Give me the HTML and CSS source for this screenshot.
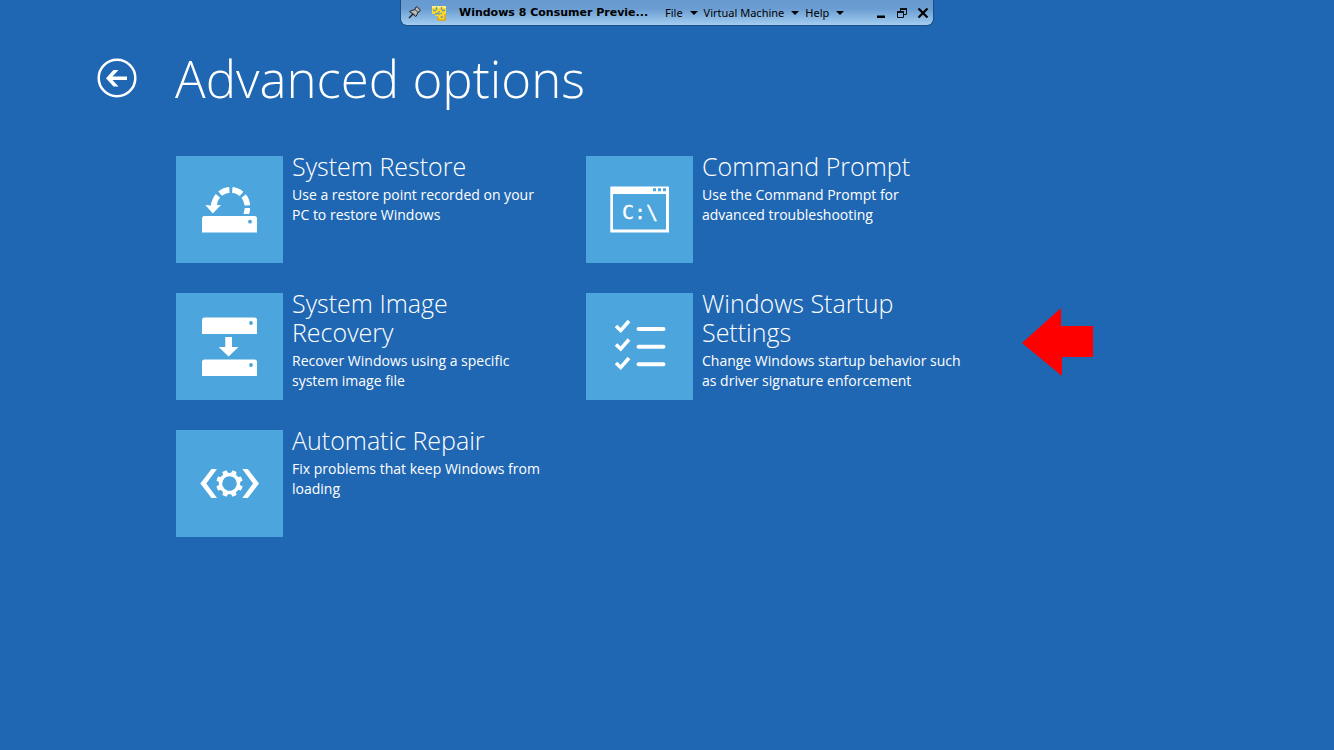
FILE: index.html
```html
<!DOCTYPE html>
<html lang="en">

<head>
    <meta charset="UTF-8">
    <meta name="viewport" content="width=device-width, initial-scale=1">
    <title>Advanced options</title>
    <link rel="stylesheet" href="styles.css">
</head>

<body>
    <!-- Virtual machine connection bar -->
    <nav class="vm-bar">
        <button class="vm-pin" type="button" aria-label="Pin">
            <svg width="13" height="13" viewBox="0 0 13 13">
                <path d="M1 12L5 8" stroke="#222" stroke-width="1.4"/>
                <path d="M1.500 5.500L4 4.500L7 3.500L7.500 1.500L9 .7L12.300 4L11.500 5.500L10 6L9 8.500L8 10.500Z" fill="#bbb" stroke="#222"/>
                <path d="M7 3.500L9.700 6M4 6.500L6.500 9" stroke="#333"/>
            </svg>
        </button>
        <svg class="vm-logo" width="16" height="16" viewBox="0 0 16 16">
            <path d="M1 1H15V10H14V15H7V11H4V9H1Z" fill="#f8d92f"/>
            <path d="M1 1H15V3H1Z" fill="#fdf07a"/>
            <path d="M14 9V15H7V12" fill="none" stroke="#e8a800" stroke-width="1.500"/>
            <path d="M5.500 2V5M10.500 2V5M2 5.500H5M11 5.500H14M5 10V8.500H7M8 6V10M11 8.500H9.500M9.500 12H12" stroke="#7295a8" stroke-width="1.300" fill="none"/>
        </svg>
        <strong class="vm-title">Windows 8 Consumer Previe...</strong>
        <button class="vm-menu" type="button">File</button>
        <button class="vm-menu" type="button">Virtual Machine</button>
        <button class="vm-menu" type="button">Help</button>
        <div class="vm-controls">
            <button type="button" aria-label="Minimize">
                <svg width="12" height="12" viewBox="0 0 12 12"><path d="M2 8.500H10V11H2Z" fill="#000"/></svg>
            </button>
            <button type="button" aria-label="Restore">
                <svg width="12" height="12" viewBox="0 0 12 12" fill="none" stroke="#111">
                    <path d="M4.500 4V1.500H10.500V7.500H8"/>
                    <path d="M4 2H11" stroke-width="2"/>
                    <path d="M1.500 4.500H7.500V10.500H1.500Z"/>
                    <path d="M1 5H8" stroke-width="2"/>
                </svg>
            </button>
            <button type="button" aria-label="Close">
                <svg width="12" height="12" viewBox="0 0 12 12"><path d="M1.500 1.500L10.500 10.500M10.500 1.500L1.500 10.500" stroke="#000" stroke-width="2.200"/></svg>
            </button>
        </div>
    </nav>

    <header class="page-header">
        <button class="back" type="button" aria-label="Back">
            <svg width="40" height="40" viewBox="0 0 40 40">
                <circle cx="20" cy="20" r="18.300" fill="none" stroke="#fff" stroke-width="2.500"/>
                <path d="M9 20.300L16.500 12H21.500L15.500 18.600H30V22H15.500L21.500 28.600H16.500Z" fill="#fff"/>
            </svg>
        </button>
        <h1>Advanced options</h1>
    </header>

    <main class="options">
        <button class="option" type="button">
            <svg class="tile" viewBox="0 0 107 107">
                <path d="M38 50.500A16.700 16.700 0 0 1 71.400 50.500" fill="none" stroke="#fff" stroke-width="5.600" stroke-dasharray="10.100 3" stroke-dashoffset="-1.500"/>
                <path d="M29.300 49L35 49.500L35.500 46H41L40 49L45 49L36.800 57.500Z"/>
                <path d="M68.800 52H74V55L73 58H67.500Z"/>
                <path d="M26 76.500V62.500Q26 60 28.500 60H78.500Q81 60 81 62.500V76.500Z"/>
                <circle class="hole" cx="74" cy="65.700" r="1.900"/>
            </svg>
            <span class="option-text">
                <span class="option-title">System Restore</span>
                <span class="option-desc">Use a restore point recorded on your<br>PC to restore Windows</span>
            </span>
        </button>

        <button class="option" type="button">
            <svg class="tile" viewBox="0 0 107 107">
                <path fill-rule="evenodd" d="M25 30.500H82Q83 30.500 83 31.500V76.500H24.300V31.500Q24.300 30.500 25 30.500ZM27 38V73.500H80V38Z"/>
                <path class="hole" d="M67 32.300H70V35.300H67ZM72 32.300H75V35.300H72ZM77 32.300H80V35.300H77Z"/>
                <text x="36" y="63">C:\</text>
            </svg>
            <span class="option-text">
                <span class="option-title">Command Prompt</span>
                <span class="option-desc">Use the Command Prompt for<br>advanced troubleshooting</span>
            </span>
        </button>

        <button class="option" type="button">
            <svg class="tile" viewBox="0 0 107 107">
                <path d="M26 41V27Q26 24.500 28.500 24.500H78.500Q81 24.500 81 27V41Z"/>
                <circle class="hole" cx="75" cy="30" r="1.900"/>
                <path d="M49.300 44H56V54H62.500L52.600 63.500L42.700 54H49.300Z"/>
                <path d="M26 83V69Q26 66.500 28.500 66.500H78.500Q81 66.500 81 69V83Z"/>
                <circle class="hole" cx="75" cy="72" r="1.900"/>
            </svg>
            <span class="option-text">
                <span class="option-title">System Image Recovery</span>
                <span class="option-desc">Recover Windows using a specific<br>system image file</span>
            </span>
        </button>

        <button class="option" type="button">
            <svg class="tile" viewBox="0 0 107 107">
                <g fill="none" stroke="#fff" stroke-width="3.600">
                    <path d="M30 33L34.700 37.500L43 28"/>
                    <path d="M30 51.500L34.700 56L43 46.500"/>
                    <path d="M30 70L34.700 74.500L43 65"/>
                    <path d="M52.500 36H77.500M52.500 53.700H77.500M52.500 71.300H77.500" stroke-width="4" stroke-linecap="round"/>
                </g>
            </svg>
            <span class="option-text">
                <span class="option-title">Windows Startup Settings</span>
                <span class="option-desc">Change Windows startup behavior such<br>as driver signature enforcement</span>
            </span>
        </button>

        <svg class="pointer" width="72" height="70" viewBox="0 0 72 70">
            <path d="M0 35L39 0V18H71V49H40V68Z" fill="#f00"/>
        </svg>

        <button class="option" type="button">
            <svg class="tile" viewBox="0 0 107 107">
                <path d="M24.300 53.500L35.500 39H41L30.300 53.500L41 68H35.500Z"/>
                <path d="M83 53.500L71.800 39H66.300L77 53.500L66.300 68H71.800Z"/>
                <g transform="translate(53.500 53.500) rotate(22.500)">
                    <circle r="9" fill="none" stroke="#fff" stroke-width="3.600"/>
                    <path d="M-2.800 -9.500L-2.200 -13.300H2.200L2.800 -9.500ZM-2.800 9.500L-2.200 13.300H2.200L2.800 9.500ZM-9.500 -2.800L-13.300 -2.200V2.200L-9.500 2.800ZM9.500 -2.800L13.300 -2.200V2.200L9.500 2.800Z"/>
                    <path transform="rotate(45)" d="M-2.800 -9.500L-2.200 -13.300H2.200L2.800 -9.500ZM-2.800 9.500L-2.200 13.300H2.200L2.800 9.500ZM-9.500 -2.800L-13.300 -2.200V2.200L-9.500 2.800ZM9.500 -2.800L13.300 -2.200V2.200L9.500 2.800Z"/>
                </g>
            </svg>
            <span class="option-text">
                <span class="option-title">Automatic Repair</span>
                <span class="option-desc">Fix problems that keep Windows from<br>loading</span>
            </span>
        </button>
    </main>
</body>

</html>
```
FILE: styles.css
```css
* {
    box-sizing: border-box;
}
body {
    margin: 0;
    min-height: 100vh;
    background: #1f67b3;
    color: #fff;
    font-family: "Open Sans", "Noto Sans", sans-serif;
}
button {
    margin: 0;
    padding: 0;
    border: 0;
    background: none;
    color: inherit;
    font: inherit;
    text-align: left;
    cursor: pointer;
}
svg {
    display: block;
    flex-shrink: 0;
}

/* connection bar */
.vm-bar {
    display: flex;
    align-items: center;
    width: 534px;
    height: 26px;
    margin: 0 auto;
    padding: 0 4px 0 7px;
    border: 1px solid #174f86;
    border-top: 0;
    border-radius: 0 0 7px 7px;
    background: linear-gradient(#6699cf 0%, #6b9dd2 35%, #a3cdf0 100%);
    color: #000;
    font-family: "Noto Sans", sans-serif;
    font-size: 11px;
}
.vm-logo {
    margin: 0 12px 0 10px;
}
.vm-title {
    width: 206px;
    font-family: "DejaVu Sans", sans-serif;
    font-size: 11px;
    white-space: nowrap;
}
.vm-menu {
    display: flex;
    align-items: center;
    margin-right: 6px;
    white-space: nowrap;
}
.vm-menu::after {
    content: "";
    margin-left: 7px;
    border: 4px solid transparent;
    border-top-color: #000;
    border-bottom: 0;
}
.vm-controls {
    display: flex;
    gap: 9px;
    margin-left: auto;
}

/* heading */
.page-header {
    display: flex;
    align-items: center;
    gap: 38px;
    padding: 16px 0 0 97px;
}
h1 {
    margin: 0;
    font-size: 51px;
    font-weight: 300;
    line-height: 72px;
}

/* option tiles */
.options {
    display: grid;
    grid-template-columns: 380px 380px 1fr;
    grid-auto-rows: 107px;
    gap: 30px;
    padding: 42px 0 0 176px;
}
.option {
    display: flex;
    align-items: flex-start;
    grid-column: 1;
    gap: 9px;
}
.option:nth-of-type(even) {
    grid-column: 2;
}
.tile {
    width: 107px;
    height: 107px;
    background: #4ca5dc;
    fill: #fff;
}
.tile .hole {
    fill: #4ca5dc;
}
.tile text {
    font-family: "DejaVu Sans Mono", monospace;
    font-size: 20px;
    stroke: #fff;
    stroke-width: 0.3px;
}
.option-text {
    display: flex;
    flex-direction: column;
    gap: 4px;
    margin-top: -4px;
}
.option-title {
    max-width: 216px;
    font-size: 25px;
    font-weight: 300;
    line-height: 29px;
}
.option-desc {
    font-size: 14px;
    line-height: 20px;
    white-space: nowrap;
}
.pointer {
    grid-column: 3;
    margin: 15px 0 0 26px;
}
```
